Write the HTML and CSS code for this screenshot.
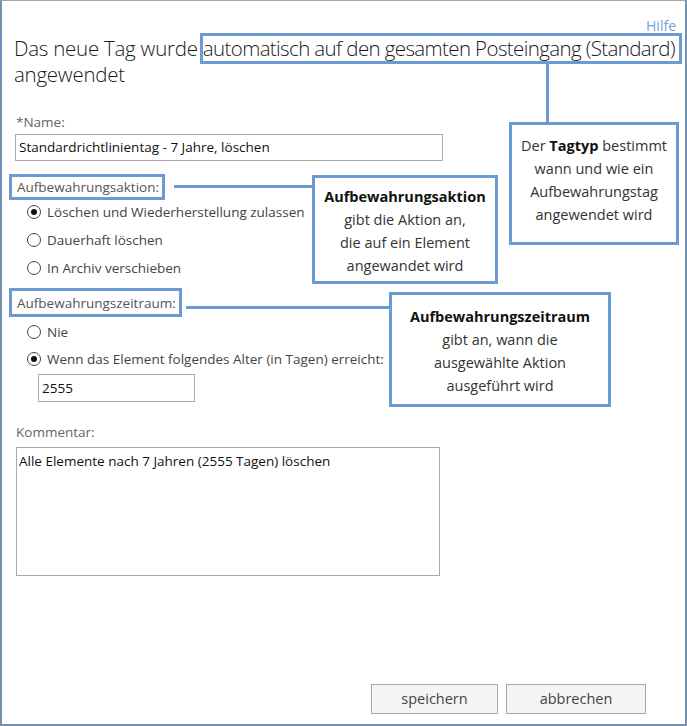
FILE: index.html
```html
<!DOCTYPE html>
<html lang="de">
<head>
<meta charset="utf-8">
<title>Aufbewahrungstag</title>
<link rel="stylesheet" href="styles.css">
</head>
<body>
<div class="dialog">
  <div class="help">Hilfe</div>
  <h1 class="title">Das neue Tag wurde <span class="hl">automatisch auf den gesamten Posteingang (Standard)</span> angewendet</h1>

  <div class="label name-label">*Name:</div>
  <div class="input name-input">Standardrichtlinientag - 7 Jahre, löschen</div>

  <div class="label boxed action-label">Aufbewahrungsaktion:</div>
  <div class="radios action-radios">
    <div class="radio-row"><span class="radio checked"></span>Löschen und Wiederherstellung zulassen</div>
    <div class="radio-row"><span class="radio"></span>Dauerhaft löschen</div>
    <div class="radio-row"><span class="radio"></span>In Archiv verschieben</div>
  </div>

  <div class="label boxed period-label">Aufbewahrungszeitraum:</div>
  <div class="radios period-radios">
    <div class="radio-row"><span class="radio"></span>Nie</div>
    <div class="radio-row"><span class="radio checked"></span>Wenn das Element folgendes Alter (in Tagen) erreicht:</div>
  </div>
  <div class="input days-input">2555</div>

  <div class="label comment-label">Kommentar:</div>
  <div class="input textarea">Alle Elemente nach 7 Jahren (2555 Tagen) löschen</div>

  <div class="buttons">
    <div class="btn btn-save">speichern</div>
    <div class="btn btn-cancel">abbrechen</div>
  </div>

  <!-- annotation overlays -->
  <div class="ann-box head-box"></div>
  <div class="ann-line vline"></div>
  <div class="callout call-tag"><div>Der <b>Tagtyp</b> bestimmt</div><div>wann und wie ein</div><div>Aufbewahrungstag</div><div>angewendet wird</div></div>

  <div class="ann-line hline-action"></div>
  <div class="callout call-action"><div class="ct">Aufbewahrungsaktion</div><div>gibt die Aktion an,</div><div>die auf ein Element</div><div>angewandet wird</div></div>

  <div class="ann-line hline-period"></div>
  <div class="callout call-period"><div class="ct">Aufbewahrungszeitraum</div><div>gibt an, wann die</div><div>ausgewählte Aktion</div><div>ausgeführt wird</div></div>
</div>
</body>
</html>
```

FILE: styles.css
```css
html, body {
  margin: 0;
  padding: 0;
  background: #ffffff;
}

.dialog {
  position: relative;
  width: 687px;
  height: 726px;
  box-sizing: border-box;
  border-top: 1px solid #a4a4a4;
  border-left: 2px solid #7391b1;
  border-right: 2px solid #7391b1;
  border-bottom: 2px solid #7391b1;
  font-family: "Open Sans", "Noto Sans", sans-serif;
  font-size: 13.5px;
  color: #333;
  display: flex;
  flex-direction: column;
  align-items: flex-start;
}

.help {
  align-self: flex-end;
  margin-top: 16px;
  margin-right: 9px;
  font-size: 14px;
  line-height: 18px;
  color: #6ea3da;
}

.title {
  margin: 0 0 0 12px;
  width: 671px;
  font-weight: 300;
  font-size: 20.5px;
  line-height: 26px;
  color: #1a1a1a;
  letter-spacing: -0.25px;
}

.hl {
  letter-spacing: -0.62px;
}

.label {
  margin-left: 14px;
  line-height: 18px;
  color: #666;
}

.name-label {
  margin-top: 26px;
}

.input {
  box-sizing: border-box;
  border: 1px solid #aaaaaa;
  background: #fff;
  color: #111;
  font-size: 13.5px;
  line-height: 18px;
  padding: 3px 3px;
}

.name-input {
  margin-top: 3px;
  margin-left: 13px;
  width: 428px;
  height: 27px;
}

.boxed {
  border: 3px solid #6b9bd2;
  padding: 1px 3px 1px 5px;
  margin-left: 7px;
  color: #555;
  background: #fff;
}

.action-label {
  margin-top: 13px;
}

.radios {
  display: flex;
  flex-direction: column;
  margin-left: 25px;
}

.radio-row {
  display: flex;
  align-items: center;
  height: 28px;
  color: #444;
}

.radio {
  box-sizing: border-box;
  width: 14px;
  height: 14px;
  border: 1px solid #444;
  border-radius: 50%;
  margin-right: 6px;
  position: relative;
  background: #fff;
}

.radio.checked::after {
  content: "";
  position: absolute;
  left: 3px;
  top: 3px;
  width: 6px;
  height: 6px;
  border-radius: 50%;
  background: #111;
}

.action-radios {
  margin-top: -2px;
}

.period-label {
  margin-top: 6px;
  padding-top: 3px;
  padding-bottom: 2px;
}

.period-radios {
  margin-top: 1px;
}

.period-radios .radio-row {
  height: 27px;
}

.days-input {
  margin-left: 36px;
  margin-top: 2px;
  width: 157px;
  height: 28px;
  padding-top: 4px;
}

.comment-label {
  margin-top: 21px;
}

.textarea {
  margin-left: 14px;
  margin-top: 6px;
  width: 424px;
  height: 129px;
  padding: 4px 2px;
}

.buttons {
  margin-top: auto;
  margin-bottom: 10px;
  margin-left: 369px;
  display: flex;
  gap: 8px;
}

.btn {
  box-sizing: border-box;
  height: 30px;
  border: 1px solid #a2abb2;
  background: #f5f5f5;
  color: #444;
  font-size: 14.5px;
  line-height: 28px;
  text-align: center;
}

.btn-save { width: 127px; }
.btn-cancel { width: 140px; }

/* annotation overlays */
.ann-box {
  position: absolute;
  box-sizing: border-box;
  border: 3px solid #6b9bd2;
}

.head-box {
  left: 198px;
  top: 32px;
  width: 482px;
  height: 31px;
}

.ann-line {
  position: absolute;
  background: #6b9bd2;
}

.vline {
  left: 544px;
  top: 62px;
  width: 3px;
  height: 61px;
}

.hline-action {
  left: 172px;
  top: 184px;
  width: 140px;
  height: 3px;
}

.hline-period {
  left: 184px;
  top: 305px;
  width: 205px;
  height: 3px;
}

.callout {
  position: absolute;
  box-sizing: border-box;
  border: 3px solid #6b9bd2;
  background: #fff;
  text-align: center;
  font-family: "Open Sans", "Noto Sans", sans-serif;
  font-size: 14.5px;
  line-height: 23px;
  color: #333;
}

.callout b,
.callout .ct {
  font-weight: 700;
  color: #111;
}

.call-tag {
  left: 507px;
  top: 121px;
  width: 170px;
  height: 123px;
  padding-top: 9px;
}

.call-action {
  left: 310px;
  top: 174px;
  width: 186px;
  height: 109px;
  padding-top: 7px;
}

.call-period {
  left: 387px;
  top: 291px;
  width: 222px;
  height: 115px;
  padding-top: 10px;
}
```
